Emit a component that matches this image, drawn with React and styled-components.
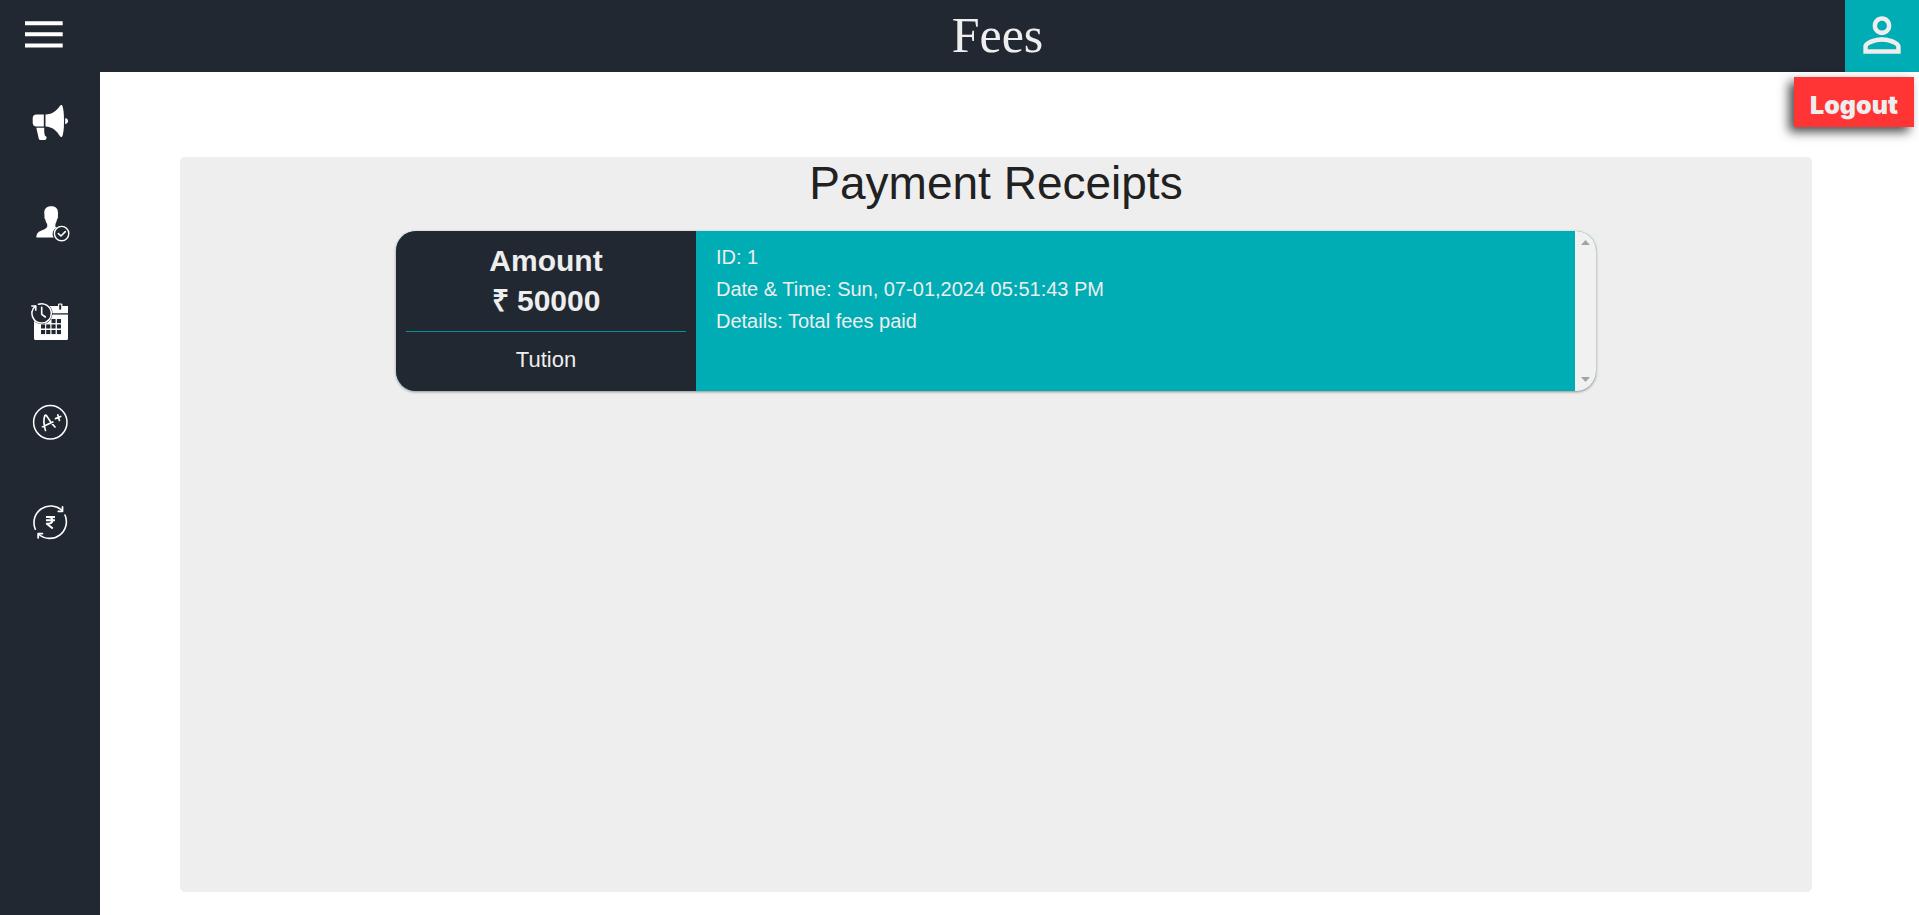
import React from "react";
import styled, { createGlobalStyle } from "styled-components";

const c = {
  dark: "#222831",
  teal: "#00adb5",
  light: "#eeeeee",
  red: "#ff3434",
};

const GlobalStyle = createGlobalStyle`
  * { box-sizing: border-box; }
  body {
    margin: 0;
    background: #fff;
    font-family: "Liberation Sans", Arial, sans-serif;
  }
`;

const Page = styled.div`
  min-height: 100vh;
  display: flex;
  flex-direction: column;
`;

const Header = styled.header`
  position: relative;
  display: flex;
  align-items: stretch;
  height: 72px;
  background: ${c.dark};
  color: ${c.light};
`;

const IconButton = styled.button`
  display: flex;
  align-items: center;
  border: 0;
  padding: 0 0 2px;
  cursor: pointer;
  color: ${c.light};
  background: transparent;
`;

const MenuButton = styled(IconButton)`
  width: 150px;
  padding-left: 24px;
  color: #fff;
`;

const ProfileButton = styled(IconButton)`
  width: 74px;
  justify-content: center;
  background: ${c.teal};
`;

const PageTitle = styled.h1`
  flex: 1;
  margin: 0;
  text-align: center;
  font: 400 50px/70px "Liberation Serif", "Times New Roman", serif;
`;

const LogoutButton = styled.button`
  position: absolute;
  top: 77px;
  right: 5px;
  width: 120px;
  height: 50px;
  padding: 6px 0 0;
  border: 0;
  background: ${c.red};
  color: ${c.light};
  font: 900 25px/44px Inter, "Arial Black", sans-serif;
  box-shadow: -5px 5px 10px rgba(0, 0, 0, 0.7);
  cursor: pointer;
`;

const Body = styled.div`
  flex: 1;
  display: flex;
`;

const Sidebar = styled.nav`
  width: 100px;
  flex-shrink: 0;
  display: flex;
  flex-direction: column;
  background: ${c.dark};
`;

const SideLink = styled.a`
  display: flex;
  align-items: center;
  justify-content: center;
  height: 100px;
  color: #fff;
`;

const Main = styled.main`
  flex: 1;
  display: flex;
  padding: 85px 107px 23px 80px;
`;

const Panel = styled.section`
  flex: 1;
  display: flex;
  flex-direction: column;
  align-items: center;
  gap: 22px;
  border-radius: 5px;
  background: ${c.light};
`;

const PanelTitle = styled.h2`
  margin: 0;
  color: #212121;
  font-weight: 400;
  font-size: 46px;
  line-height: 52px;
`;

const Receipt = styled.article`
  display: flex;
  width: 100%;
  max-width: 1200px;
  height: 160px;
  overflow: hidden;
  border-radius: 20px;
  background: ${c.teal};
  color: ${c.light};
  box-shadow: 0 1px 3px rgba(0, 0, 0, 0.4);
`;

const Summary = styled.div`
  width: 300px;
  padding: 10px;
  background: ${c.dark};
  text-align: center;
`;

const Amount = styled.h3`
  margin: 0;
  padding-bottom: 10px;
  border-bottom: 1px solid #079299;
  font-size: 30px;
  line-height: 40px;
`;

const AmountLine = styled.span`
  display: block;
`;

const Category = styled.p`
  margin: 10px 0 0;
  font-size: 22px;
  line-height: 36px;
`;

const Details = styled.div`
  flex: 1;
  padding: 10px 20px;
  font-size: 20px;
  line-height: 32px;
`;

const DetailLine = styled.p`
  margin: 0;
`;

const ScrollTrack = styled.div`
  display: flex;
  flex-direction: column;
  justify-content: space-between;
  width: 21px;
  background: #f1f1f1;
`;

const ScrollButton = styled.button`
  display: flex;
  align-items: center;
  justify-content: center;
  height: 23px;
  padding: 0;
  border: 0;
  background: transparent;
  color: #a3a3a3;
`;

const stroke = {
  fill: "none",
  stroke: "currentColor",
  strokeLinecap: "round",
  strokeLinejoin: "round",
};

const SideIcon = ({ children }) => (
  <svg width="40" height="40" viewBox="0 0 40 40" fill="currentColor" aria-hidden="true">
    {children}
  </svg>
);

const Megaphone = () => (
  <SideIcon>
    <path d="M6.5 12.4H13.8V24.6H6.5Q2.7 24.4 2.7 20.6V16.4Q2.7 12.6 6.5 12.4Z" />
    <path d="M15.5 12.6C22.5 12.4 27 8.5 30 3.8Q31 2.6 32 3Q34 6.5 34 19Q34 31.5 32 34.8Q31 35.4 30 34.2C27 29 22.5 24.7 15.5 24.4Z" />
    <path d="M35.2 16Q38 16.6 38 19.2Q38 21.7 35.2 22.3Z" />
    <path d="M6.3 25.8H14.2Q14 31 14.7 33Q15 34 16.2 34.5Q17 35 16.4 36.4L15.8 37.5Q15.5 38 14.5 38H10.5Q9 38 8.8 36.7Z" />
  </SideIcon>
);

const Attendance = () => (
  <SideIcon>
    <path d="M21.2 4.3C26 4.3 28.2 7 28 11.2L27.9 14.2Q28.4 16 27 17.5Q26.4 20.5 25.4 22V25L27 25.6Q22.6 28 22.6 32Q22.6 34 23.6 35.4H6.3Q6.3 30.5 11 28.8Q15.5 27.5 17.2 25V22Q15.7 20.5 15.3 17.5Q14 16 14.5 14.2L14.3 11.2C14 7 16.5 4.3 21.2 4.3Z" />
    <circle cx="31.6" cy="31.6" r="7.2" {...stroke} strokeWidth="1.4" />
    <path d="M28.4 31.6L31 34L35.3 29.6" {...stroke} strokeWidth="1.6" />
  </SideIcon>
);

const cells = [
  [21.5, 17], [26.9, 17],
  [11, 22.4], [16.2, 22.4], [21.5, 22.4], [26.9, 22.4],
  [11, 28], [16.2, 28], [21.5, 28], [26.9, 28],
];

const Timetable = () => (
  <SideIcon>
    <path d="M6 4H38V36.5Q38 38 36.5 38H5.5Q4 38 4 36.5V6Z" />
    <path d="M22 11.9H38" stroke={c.dark} strokeWidth="1.3" />
    <rect x="28" y="1.4" width="4.4" height="6" rx="1" />
    <rect x="29.2" y="2.6" width="2" height="5" fill={c.dark} />
    {cells.map(([x, y]) => (
      <rect key={`${x}-${y}`} x={x} y={y} width="4.1" height="4.1" fill={c.dark} />
    ))}
    <path d="M0 0H12V11H0Z" fill={c.dark} />
    <circle cx="11.7" cy="11.3" r="10.8" fill={c.dark} />
    <path d="M8.5 2.2A9.7 9.7 0 1 1 2.1 9.5Q2.6 6.5 5.5 4.2" {...stroke} strokeWidth="1.5" />
    <path d="M1.8 4H5.8V8.3" {...stroke} strokeWidth="1.5" />
    <path d="M11.7 5.3V12.3L15.4 15" {...stroke} strokeWidth="1.6" />
  </SideIcon>
);

const Grades = () => (
  <SideIcon>
    <circle cx="20.3" cy="20.3" r="16.7" {...stroke} strokeWidth="1.5" />
    <path d="M15.5 28.4Q12.6 19.5 14.9 13.4Q16 12.6 17 14.4Q20.5 20.5 25 25M12.5 24.7L22.8 20M27.8 12.8L29.4 18.5M25.5 16.6L30.7 14.5" {...stroke} strokeWidth="1.7" />
  </SideIcon>
);

const Fees = () => (
  <SideIcon>
    <path d="M5.3 27.2A16.7 16.7 0 0 1 32 8.4M35 13A16.7 16.7 0 0 1 9 32.5" {...stroke} strokeWidth="1.6" />
    <path d="M32.5 5V9.3H28.3M8.2 35.8V31.6H12.4" {...stroke} strokeWidth="1.8" />
    <path d="M16 15H25M16 18.3H25M16 15H18.5C23.5 15 23.5 21.7 18.5 21.7H16.8L22.8 26.6" {...stroke} strokeLinecap="butt" strokeWidth="2" />
  </SideIcon>
);

const links = [
  ["Announcements", Megaphone],
  ["Attendance", Attendance],
  ["Timetable", Timetable],
  ["Grades", Grades],
  ["Fees", Fees],
];

export default function App() {
  return (
    <Page>
      <GlobalStyle />
      <Header>
        <MenuButton aria-label="Menu">
          <svg width="40" height="28" viewBox="0 0 40 28" fill="currentColor">
            <path d="M1 0.3H38.7V4.3H1ZM1 11.3H38.7V15.3H1ZM1 22.5H38.7V26.5H1Z" />
          </svg>
        </MenuButton>
        <PageTitle>Fees</PageTitle>
        <ProfileButton aria-label="Profile">
          <svg width="56" height="56" viewBox="0 0 24 24" fill="currentColor">
            <path d="M12 5.9a2.1 2.1 0 1 1 0 4.2 2.1 2.1 0 0 1 0-4.2m0 9c2.97 0 6.1 1.46 6.1 2.1v1.1H5.9V17c0-.64 3.13-2.1 6.1-2.1M12 4C9.790 4 8 5.790 8 8s1.790 4 4 4 4-1.790 4-4-1.790-4-4-4zm0 9c-2.670 0-8 1.340-8 4v3h16v-3c0-2.660-5.330-4-8-4z" />
          </svg>
        </ProfileButton>
        <LogoutButton>Logout</LogoutButton>
      </Header>
      <Body>
        <Sidebar>
          {links.map(([label, Icon]) => (
            <SideLink key={label} href="#" aria-label={label}>
              <Icon />
            </SideLink>
          ))}
        </Sidebar>
        <Main>
          <Panel>
            <PanelTitle>Payment Receipts</PanelTitle>
            <Receipt>
              <Summary>
                <Amount>
                  <AmountLine>Amount</AmountLine>
                  <AmountLine>₹ 50000</AmountLine>
                </Amount>
                <Category>Tution</Category>
              </Summary>
              <Details>
                <DetailLine>ID: 1</DetailLine>
                <DetailLine>Date &amp; Time: Sun, 07-01,2024 05:51:43 PM</DetailLine>
                <DetailLine>Details: Total fees paid</DetailLine>
              </Details>
              <ScrollTrack>
                <ScrollButton aria-label="Scroll up">
                  <svg width="9" height="5" viewBox="0 0 9 5" fill="currentColor">
                    <path d="M0 5L4.5 0L9 5Z" />
                  </svg>
                </ScrollButton>
                <ScrollButton aria-label="Scroll down">
                  <svg width="9" height="5" viewBox="0 0 9 5" fill="currentColor">
                    <path d="M0 0L4.5 5L9 0Z" />
                  </svg>
                </ScrollButton>
              </ScrollTrack>
            </Receipt>
          </Panel>
        </Main>
      </Body>
    </Page>
  );
}
